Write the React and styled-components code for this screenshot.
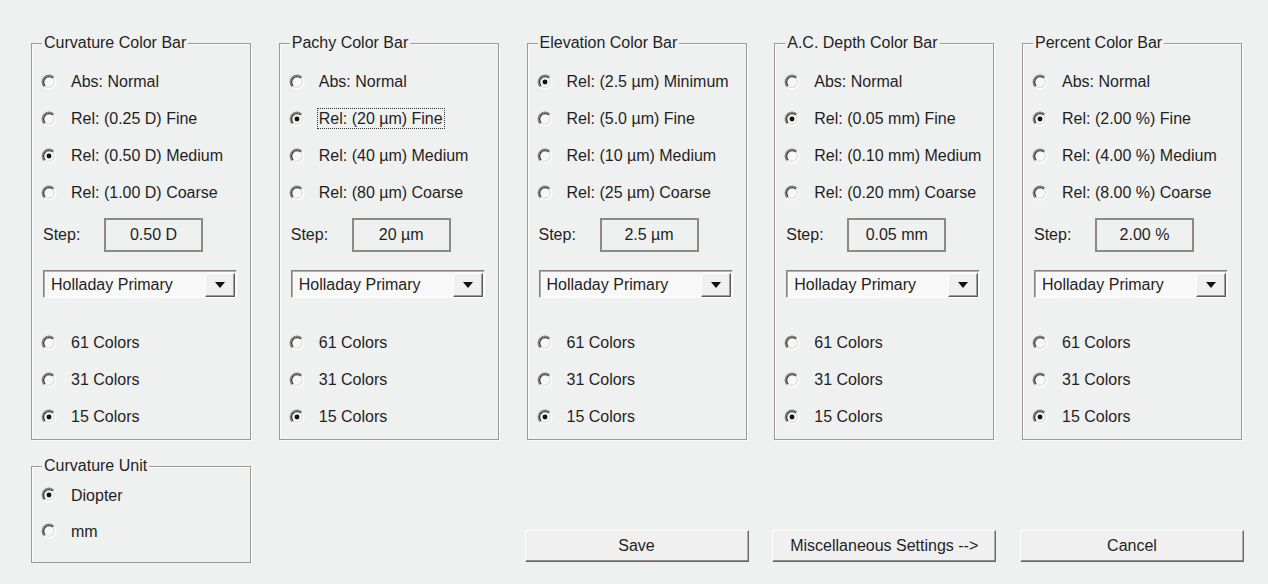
import styled, { createGlobalStyle } from "styled-components"

const GlobalStyle = createGlobalStyle`
    body {
        margin: 0;
        background: #eff0f0;
        font-family: "Liberation Sans", Arial, sans-serif;
        font-size: 16px;
        color: #1f1f1f;
    }
`

const groups = [
    {
        title: "Curvature Color Bar",
        options: ["Abs: Normal", "Rel: (0.25 D) Fine", "Rel: (0.50 D) Medium", "Rel: (1.00 D) Coarse"],
        selected: 2,
        step: "0.50 D",
    },
    {
        title: "Pachy Color Bar",
        options: ["Abs: Normal", "Rel: (20 µm) Fine", "Rel: (40 µm) Medium", "Rel: (80 µm) Coarse"],
        selected: 1,
        focused: 1,
        step: "20 µm",
    },
    {
        title: "Elevation Color Bar",
        options: ["Rel: (2.5 µm) Minimum", "Rel: (5.0 µm) Fine", "Rel: (10 µm) Medium", "Rel: (25 µm) Coarse"],
        selected: 0,
        step: "2.5 µm",
    },
    {
        title: "A.C. Depth Color Bar",
        options: ["Abs: Normal", "Rel: (0.05 mm) Fine", "Rel: (0.10 mm) Medium", "Rel: (0.20 mm) Coarse"],
        selected: 1,
        step: "0.05 mm",
    },
    {
        title: "Percent Color Bar",
        options: ["Abs: Normal", "Rel: (2.00 %) Fine", "Rel: (4.00 %) Medium", "Rel: (8.00 %) Coarse"],
        selected: 1,
        step: "2.00 %",
    },
]

const colorCounts = ["61 Colors", "31 Colors", "15 Colors"]

// whole dialog: 5 columns of group boxes, second row holds unit box + buttons
const Page = styled.div`
    display: grid;
    grid-template-columns: repeat(5, 220px);
    column-gap: 27.75px;
    row-gap: 26px;
    padding: 43px 0 0 31px;
`

// etched frame like a win32 group box
const GroupBox = styled.div`
    box-sizing: border-box;
    height: ${props => props.h}px;
    display: flex;
    flex-direction: column;
    border: 1px solid #9e9995;
    box-shadow: inset 1px 1px 0 #fbfbfb, 1px 1px 0 #fbfbfb;
`

// title sits on the top border line
const GroupTitle = styled.div`
    align-self: flex-start;
    margin: -11px 0 0 10px;
    padding: 0 2px;
    height: 20px;
    line-height: 20px;
    background: #eff0f0;
    white-space: nowrap;
`

const RadioList = styled.div`
    display: flex;
    flex-direction: column;
    margin-top: ${props => props.top}px;
`

const RadioRow = styled.div`
    height: ${props => props.h || 37}px;
    display: flex;
    align-items: center;
    gap: 14px;
    padding-left: 9px;
    white-space: nowrap;
    svg {
        flex-shrink: 0;
    }
`

const RadioLabel = styled.span`
    padding: 0 1px;
    line-height: 19px;
    border: 1px dotted ${props => props.focused ? "#333" : "transparent"};
    margin-left: -2px;
`

const StepRow = styled.div`
    display: flex;
    align-items: center;
    height: 34px;
    margin-top: 7px;
    padding-left: 11px;
`

const StepLabel = styled.span`
    width: 61px;
`

const StepBox = styled.div`
    box-sizing: border-box;
    width: 99px;
    height: 34px;
    display: flex;
    align-items: center;
    justify-content: center;
    border: 2px solid #8e8985;
    white-space: nowrap;
`

const Select = styled.div`
    box-sizing: border-box;
    width: 194px;
    height: 28px;
    margin: 18px 0 0 11px;
    display: flex;
    align-items: center;
    justify-content: space-between;
    background: #f8f8f8;
    border: 1px solid;
    border-color: #86817e #ffffff #ffffff #86817e;
    box-shadow: inset 1px 1px 0 #b3aeab;
    padding: 1px 1px 0 7px;
`

const SelectButton = styled.div`
    box-sizing: border-box;
    width: 30px;
    height: 24px;
    display: flex;
    align-items: center;
    justify-content: center;
    background: #f0f0f0;
    border: 1px solid;
    border-color: #ffffff #5e5a57 #5e5a57 #ffffff;
    box-shadow: inset -1px -1px 0 #a29e9b;
`

const Buttons = styled.div`
    grid-column: 3 / 6;
    align-self: end;
    display: grid;
    grid-template-columns: repeat(3, 220px);
    column-gap: 27.75px;
    margin-bottom: 1px;
`

const Button = styled.button`
    justify-self: center;
    width: 224px;
    height: 32px;
    font-family: inherit;
    font-size: 16px;
    color: #1f1f1f;
    background: #f0f0f0;
    border: 1px solid;
    border-color: #ffffff #6b6764 #6b6764 #ffffff;
    box-shadow: inset 0 -1px 0 #8f8b88, inset -1px 0 0 #b0aca9;
    padding: 0;
`

const Radio = ({ checked }) => (
    <svg width="16" height="16" viewBox="0 0 13 13">
        <circle cx="6.5" cy="6.5" r="5" fill="#f7f7f7" />
        <path d="M2.61 10.39 A5.5 5.5 0 0 1 10.39 2.61" fill="none" stroke="#8a8582" strokeWidth="1.1" />
        <path d="M10.39 2.61 A5.5 5.5 0 0 1 2.61 10.39" fill="none" stroke="#ffffff" strokeWidth="1.1" />
        <path d="M3.32 9.68 A4.5 4.5 0 0 1 9.68 3.32" fill="none" stroke="#3e3c3a" strokeWidth="1.1" />
        <path d="M9.68 3.32 A4.5 4.5 0 0 1 3.32 9.68" fill="none" stroke="#e2e0de" strokeWidth="1.1" />
        {checked && <circle cx="6.5" cy="6.5" r="2" fill="#111" />}
    </svg>
)

const ColorBarGroup = ({ group }) => (
    <GroupBox h={397}>
        <GroupTitle>{group.title}</GroupTitle>
        <RadioList top={10}>
            {group.options.map((opt, i) => (
                <RadioRow key={opt}>
                    <Radio checked={i === group.selected} />
                    <RadioLabel focused={i === group.focused}>{opt}</RadioLabel>
                </RadioRow>
            ))}
        </RadioList>
        <StepRow>
            <StepLabel>Step:</StepLabel>
            <StepBox>{group.step}</StepBox>
        </StepRow>
        <Select>
            <span>Holladay Primary</span>
            <SelectButton>
                <svg width="10" height="6" viewBox="0 0 10 6">
                    <path d="M0 0 H10 L5 6 Z" fill="#111" />
                </svg>
            </SelectButton>
        </Select>
        <RadioList top={26}>
            {colorCounts.map((c, i) => (
                <RadioRow key={c}>
                    <Radio checked={i === 2} />
                    <RadioLabel>{c}</RadioLabel>
                </RadioRow>
            ))}
        </RadioList>
    </GroupBox>
)

const App = () => {
    return (
        <>
            <GlobalStyle />
            <Page>
                {groups.map(g => (
                    <ColorBarGroup key={g.title} group={g} />
                ))}
                <GroupBox h={97}>
                    <GroupTitle>Curvature Unit</GroupTitle>
                    <RadioList top={1}>
                        <RadioRow h={36}>
                            <Radio checked />
                            <RadioLabel>Diopter</RadioLabel>
                        </RadioRow>
                        <RadioRow h={36}>
                            <Radio />
                            <RadioLabel>mm</RadioLabel>
                        </RadioRow>
                    </RadioList>
                </GroupBox>
                <Buttons>
                    <Button>Save</Button>
                    <Button>Miscellaneous Settings --&gt;</Button>
                    <Button>Cancel</Button>
                </Buttons>
            </Page>
        </>
    )
}

export default App
